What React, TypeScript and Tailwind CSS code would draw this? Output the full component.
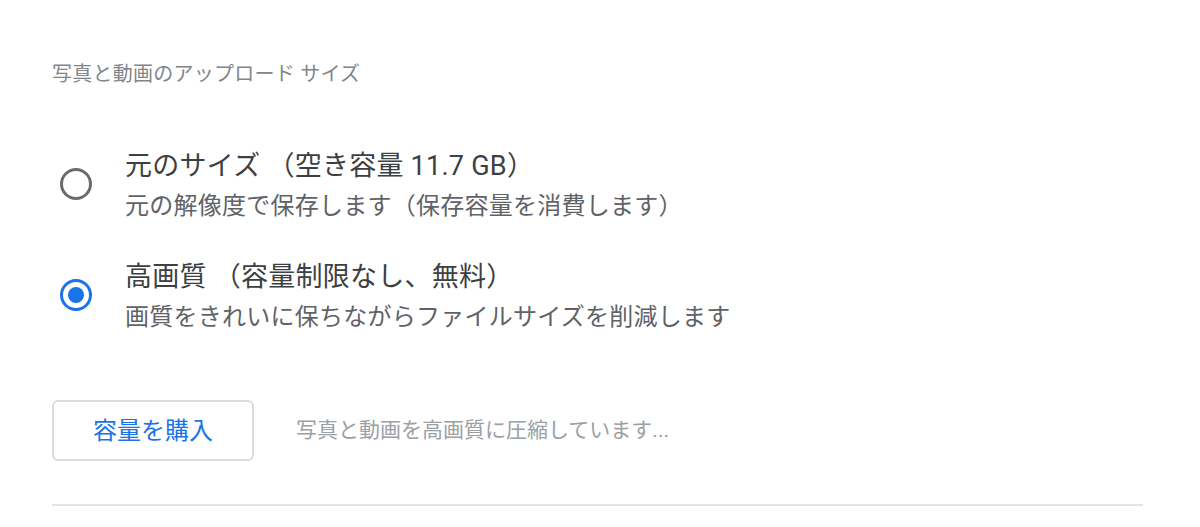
import React from "react";

const font = { fontFamily: "Roboto, 'Noto Sans CJK JP', sans-serif" };

function Radio({ checked }: { checked: boolean }) {
  return (
    <div
      className={
        "w-[32px] h-[32px] rounded-full border-[3px] flex items-center justify-center shrink-0 " +
        (checked ? "border-[#1a73e8]" : "border-[#6b6b6b]")
      }
    >
      {checked && <div className="w-[16px] h-[16px] rounded-full bg-[#1a73e8]" />}
    </div>
  );
}

function Option({ checked, title, sub }: { checked: boolean; title: string; sub: string }) {
  return (
    <div className="flex items-center">
      <div className="w-[73px] pl-[8px] pb-[4px] flex items-center">
        <Radio checked={checked} />
      </div>
      <div className="flex flex-col tracking-[0.25px]">
        <div className="text-[27px] leading-[40px] text-[#3c4043]">{title}</div>
        <div className="text-[24px] leading-[40px] text-[#5f6368]">{sub}</div>
      </div>
    </div>
  );
}

export default function App() {
  return (
    <div className="w-[1200px] h-[527px] bg-white pl-[52px] pr-[57px] pt-[59px]" style={font}>
      <div className="text-[20px] leading-[30px] tracking-[0.25px] text-[#80868b]">写真と動画のアップロード サイズ</div>
      <div className="mt-[57px] flex flex-col gap-[31px]">
        <Option checked={false} title="元のサイズ （空き容量 11.7 GB）" sub="元の解像度で保存します（保存容量を消費します）" />
        <Option checked={true} title="高画質 （容量制限なし、無料）" sub="画質をきれいに保ちながらファイルサイズを削減します" />
      </div>
      <div className="mt-[63px] flex items-center">
        <button className="w-[202px] h-[61px] rounded-[6px] border-2 border-[#dadce0] bg-white text-[24px] text-[#1a73e8]">
          容量を購入
        </button>
        <div className="ml-[42px] text-[21px] text-[#9aa0a6]">写真と動画を高画質に圧縮しています...</div>
      </div>
      <div className="mt-[43px] h-[2px] bg-[#e3e4e6]" />
    </div>
  );
}
